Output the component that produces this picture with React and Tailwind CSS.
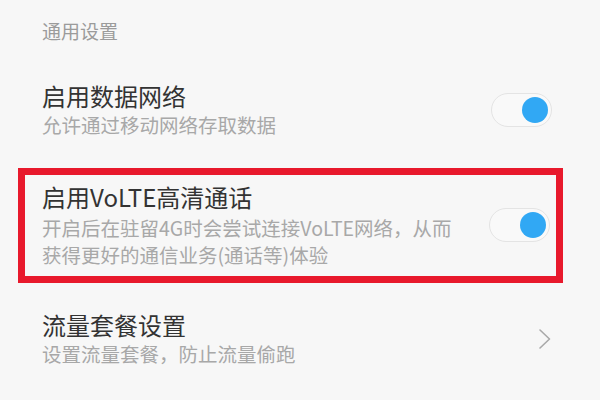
import React from "react";

const font = { fontFamily: '"Noto Sans CJK SC", "Noto Sans", sans-serif' };

function Toggle() {
  return (
    <div className="relative w-[61px] h-[34px] rounded-full border-[1.5px] border-[#e4e4e4] bg-[#f9f9f9] shrink-0">
      <div className="absolute right-[3px] top-1/2 -translate-y-1/2 w-[26px] h-[26px] rounded-full bg-[#31a8f4]" />
    </div>
  );
}

function Chevron() {
  return (
    <svg width="14" height="22" viewBox="0 0 14 22" className="shrink-0">
      <path d="M2 2 L11.5 11 L2 20" fill="none" stroke="#a9a9a9" strokeWidth="1.6" strokeLinecap="round" strokeLinejoin="round" />
    </svg>
  );
}

export default function App() {
  return (
    <div className="w-[600px] h-[400px] overflow-hidden bg-[#f7f7f7]" style={font}>
      {/* section header */}
      <div className="pt-[20px] pl-[42px] text-[19px] leading-[22px] text-[#9b9b9b]">通用设置</div>

      {/* data network */}
      <div className="mt-[39px] flex items-center pl-[42px] pr-[48px]">
        <div className="flex-1">
          <div className="text-[24px] leading-[30px] text-[#333]">启用数据网络</div>
          <div className="text-[19.5px] leading-[28px] text-[#a8a8a8]">允许通过移动网络存取数据</div>
        </div>
        <Toggle />
      </div>

      {/* VoLTE, highlighted */}
      <div className="mt-[29px] ml-[18px] w-[545px] border-[7px] border-[#e8192c] flex items-center pl-[17px] pr-[6px] pt-[7px] pb-[8px]">
        <div className="flex-1">
          <div className="text-[24px] leading-[30px] text-[#333]">启用VoLTE高清通话</div>
          <div className="mt-[2px] text-[19.5px] leading-[27px] text-[#a8a8a8]">
            开启后在驻留4G时会尝试连接VoLTE网络，从而
            <br />
            获得更好的通信业务(通话等)体验
          </div>
        </div>
        <Toggle />
      </div>

      {/* data plan */}
      <div className="mt-[27px] flex items-center pl-[42px] pr-[48px]">
        <div className="flex-1">
          <div className="text-[24px] leading-[30px] text-[#333]">流量套餐设置</div>
          <div className="text-[19.5px] leading-[28px] text-[#a8a8a8]">设置流量套餐，防止流量偷跑</div>
        </div>
        <Chevron />
      </div>
    </div>
  );
}
